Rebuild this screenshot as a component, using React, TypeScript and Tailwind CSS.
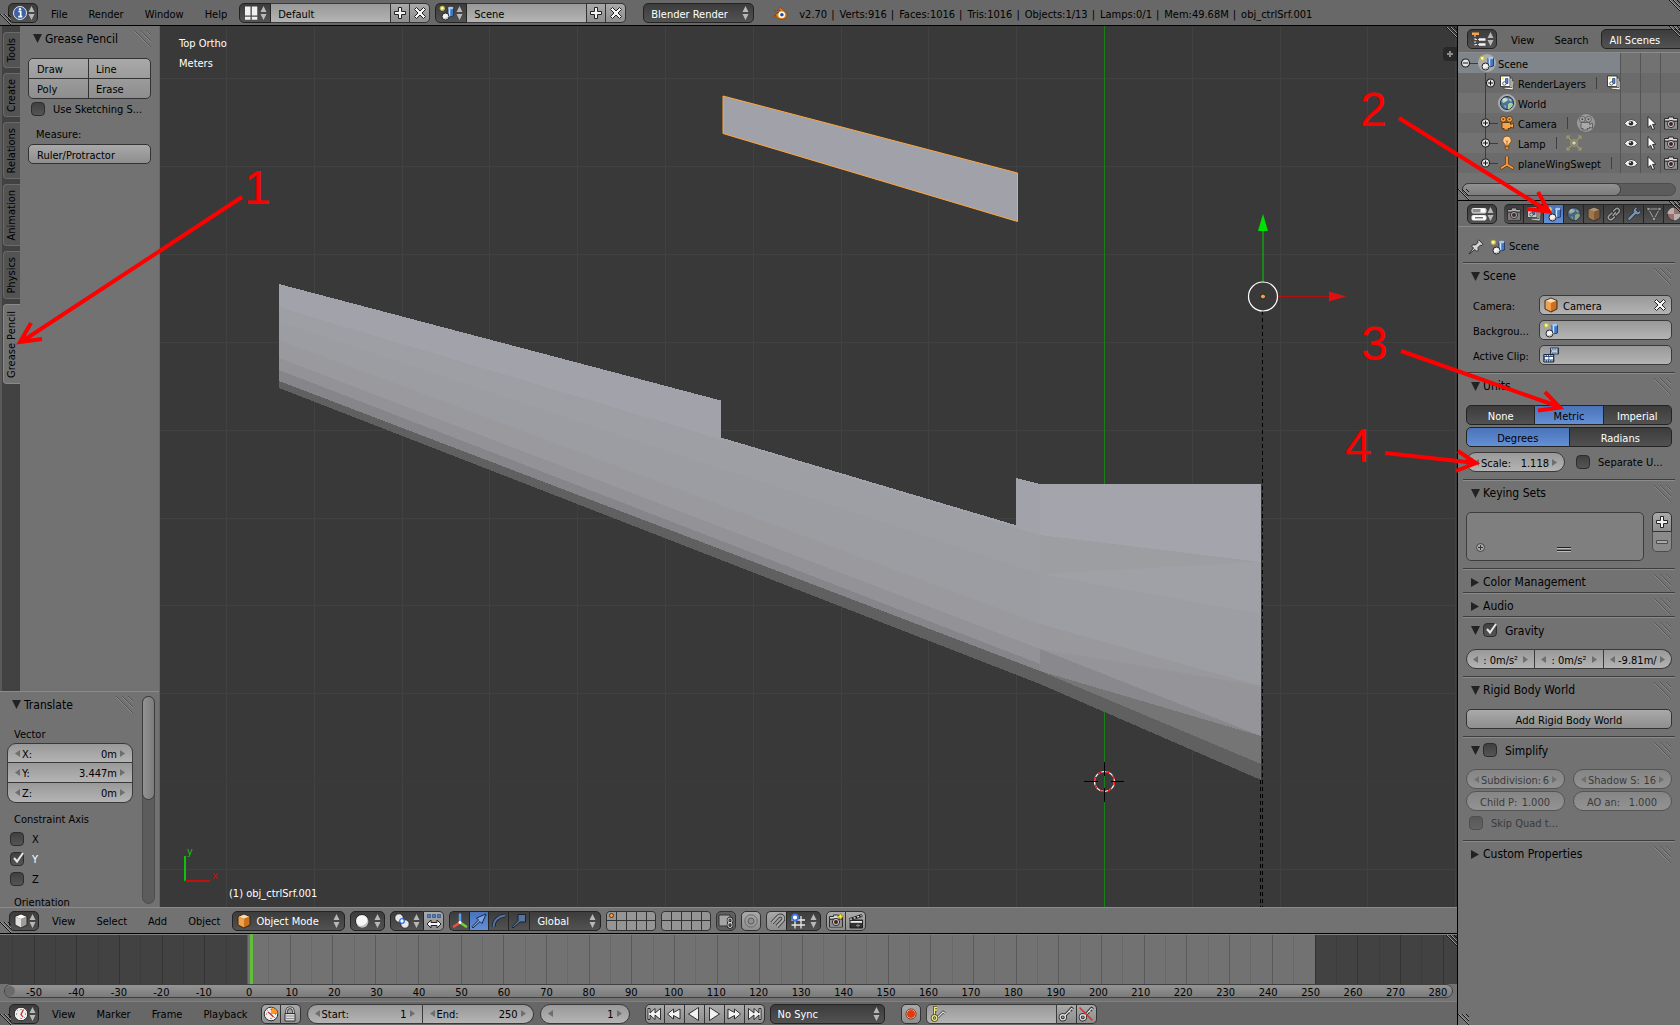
import React from 'react';
import clsx from 'clsx';

const raised = 'bg-linear-to-b from-[#a9a9a9] to-[#8e8e8e] border-[#333333] text-black';
const sunken = 'bg-linear-to-b from-[#999999] to-[#b4b4b4] border-[#3a3a3a] text-black';
const dark = 'bg-linear-to-b from-[#3c3c3c] to-[#525252] border-[#232323] text-white';
const blue = 'bg-linear-to-b from-[#4a73b8] to-[#6590d6] border-[#232323] text-black';

/* ---------- icons ---------- */

const Svg = ({ children, size = 16 }: { children: React.ReactNode; size?: number }) => (
  <svg width={size} height={size} viewBox="0 0 16 16" className="shrink-0" aria-hidden="true">
    {children}
  </svg>
);

const UpDown = () => (
  <svg width="7" height="14" viewBox="0 0 7 14" className="shrink-0" fill="#b8b8b8" aria-hidden="true">
    <path d="M3.500 0 6.500 6h-6zM3.500 14 6.500 8h-6z" />
  </svg>
);

const TriLeft = () => (
  <svg width="5" height="7" viewBox="0 0 5 7" className="shrink-0" fill="#6e6e6e" aria-hidden="true">
    <path d="M5 0v7L0 3.500z" />
  </svg>
);

const TriRight = () => (
  <svg width="5" height="7" viewBox="0 0 5 7" className="shrink-0" fill="#6e6e6e" aria-hidden="true">
    <path d="M0 0v7l5-3.500z" />
  </svg>
);

const InfoIcon = () => (
  <Svg>
    <circle cx="8" cy="8" r="6.500" fill="#3d62a0" stroke="#dfe6f0" strokeWidth="1" />
    <path d="M6.500 6.500h2.200v5M6.300 11.600h4" stroke="#fff" strokeWidth="1.600" fill="none" />
    <circle cx="8" cy="4.200" r="1.200" fill="#fff" />
  </Svg>
);

const LayoutIcon = () => (
  <Svg>
    <path d="M2 1.500h5.500v9H2zM8.800 1.500h5.500v9H8.800zM2 11.700h5.500v3H2zM8.800 11.700h5.500v3H8.800z" fill="#f1f1f1" />
  </Svg>
);

const SceneIcon = () => (
  <Svg>
    <path d="M9 3v8q2.500 1.500 5.500 0V3z" fill="#3f78cb" stroke="#1a2f55" strokeWidth=".8" />
    <path d="M9.600 3.500h1.600v8H9.600z" fill="#cfe2fb" />
    <ellipse cx="11.700" cy="3" rx="2.800" ry="1.200" fill="#a9c8ee" />
    <circle cx="6.500" cy="11.500" r="3.500" fill="#f2f2f2" stroke="#222" strokeWidth="1" />
    <path d="M4.500 13.500a3.200 3.200 0 0 0 5-3q-1 2.500-5 3z" fill="#bbb" />
    <circle cx="3.300" cy="3.300" r="2" fill="#fbf9d2" stroke="#c2bb45" strokeWidth="1.300" />
  </Svg>
);

const PlusIcon = () => (
  <Svg>
    <path d="M6.500 2.500h3v4h4v3h-4v4h-3v-4h-4v-3h4z" fill="#f4f4f4" stroke="#222" strokeWidth="1" />
  </Svg>
);

const MinusIcon = () => (
  <Svg>
    <path d="M2.500 6.500h11v3h-11z" fill="#a8a8a8" stroke="#4c4c4c" strokeWidth="1" />
  </Svg>
);

const CrossIcon = () => (
  <Svg>
    <path d="m2.500 4.500 2-2L8 6l3.500-3.500 2 2L10 8l3.500 3.500-2 2L8 10l-3.500 3.500-2-2L6 8z" fill="#f4f4f4" stroke="#222" strokeWidth="1" />
  </Svg>
);

const BlenderIcon = () => (
  <Svg>
    <path d="M1 11.500 7 7H2.500V5.700h6L6.700 4l1.400-1.500 5.400 4.600Q15.500 9 15 11t-3 3-5.500-.4-2.700-3.600L2 12.600z" fill="#ee7f1b" stroke="#5e3107" strokeWidth=".5" />
    <circle cx="9.700" cy="9.700" r="3.300" fill="#fff" />
    <circle cx="9.900" cy="9.700" r="1.800" fill="#1f4f9a" />
  </Svg>
);

const CubeIcon = ({ tone = 'orange' }: { tone?: 'orange' | 'white' | 'dim' }) => {
  const fills = {
    orange: ['#ffd9a6', '#f3a04a', '#c9711c'],
    white: ['#ffffff', '#dedede', '#9c9c9c'],
    dim: ['#dcb489', '#c48a50', '#966233'],
  }[tone];
  return (
    <Svg>
      <path d="M8 1 14 3.500 8 6 2 3.500z" fill={fills[0]} />
      <path d="M2 3.500 8 6v9l-6-3z" fill={fills[1]} />
      <path d="M14 3.500 8 6v9l6-3z" fill={fills[2]} />
      <path d="M8 1 14 3.500V12l-6 3-6-3V3.500z" fill="none" stroke="#2b2118" strokeWidth=".9" />
    </Svg>
  );
};

const TreeIcon = () => (
  <Svg>
    <path d="M1 1.500h7v2.500H1z" fill="#f5a64c" />
    <path d="M4 4v10.500M4 8.500h4M4 13.500h4" stroke="#ddd" strokeWidth="1" fill="none" strokeDasharray="2 1" />
    <path d="M8 7.300h6.500v2.500H8zM8 12.300h6.500v2.500H8z" fill="#f5f5f5" />
  </Svg>
);

const PropsIcon = () => (
  <Svg>
    <rect x="1" y="2.500" width="14" height="4.500" rx="1.200" fill="#8d8d8d" stroke="#eee" />
    <path d="M9.500 3h5v3.500h-5z" fill="#fff" />
    <rect x="1" y="9.500" width="14" height="4.500" rx="1.200" fill="#fff" stroke="#eee" />
    <path d="M4 11.800h8" stroke="#333" />
  </Svg>
);

const LayersIcon = () => (
  <Svg>
    <path d="m6 5 9 1-1 9-9-1z" fill="#f7f3e2" stroke="#333" strokeWidth=".7" />
    <path d="M3.500 3h9.500v9.500H3.500z" fill="#eee" stroke="#333" strokeWidth=".7" />
    <path d="M1.500 1h9.500v10.500H1.500z" fill="#fff" stroke="#222" strokeWidth=".8" />
    <path d="M6.500 3.500H9v5H6.500z" fill="#4d86d6" stroke="#1a2f55" strokeWidth=".6" />
    <circle cx="5.400" cy="8.500" r="1.700" fill="#fff" stroke="#222" strokeWidth=".7" />
    <circle cx="3.800" cy="3.600" r="1.100" fill="#e9e36c" />
  </Svg>
);

const WorldIcon = () => (
  <Svg>
    <circle cx="8" cy="8" r="6.500" fill="#4a719f" stroke="#1f2f42" />
    <path d="M3.500 4.500q3-2.500 4-.5T6.500 7t-2 1-2-1.500zM9 9q3-2 4.500-.5T11.500 13 9 11.500zM9.500 3.500l2.500.8 1 2-2 .2zM5 10l2 1-.5 2.500z" fill="#a9cf9b" />
    <ellipse cx="6.500" cy="4.500" rx="3" ry="1.800" fill="#fff" opacity=".45" />
  </Svg>
);

const MovieCamIcon = ({ muted = false }: { muted?: boolean }) => (
  <Svg>
    <g fill={muted ? '#a9a9a9' : '#f5a44a'} stroke={muted ? '#5b5b5b' : '#5e3710'} strokeWidth=".9">
      <circle cx="4.300" cy="4.300" r="2.900" />
      <circle cx="10.500" cy="4.300" r="2.900" />
      <path d="M3 7.500h8.500v2l3-1.300v5L11.500 12v1.500H9l.8 1.500H4.500l.7-1.500H3z" />
    </g>
    <circle cx="4.300" cy="4.300" r="1" fill="#5a4128" />
    <circle cx="10.500" cy="4.300" r="1" fill="#5a4128" />
  </Svg>
);

const BulbIcon = () => (
  <Svg>
    <path d="M8 1a4.300 4.300 0 0 0-2.500 7.800q.7 1 .7 2.200h3.600q0-1.200.7-2.200A4.300 4.300 0 0 0 8 1z" fill="#ffc98a" stroke="#7d481a" strokeWidth=".9" />
    <path d="M7 5.500 8 7l1-1.500M8 7v3.500" stroke="#b35f18" strokeWidth=".8" fill="none" />
    <path d="M6.300 11.300h3.400v2.500L8.500 15h-1l-1.200-1.200z" fill="#d98b43" stroke="#5e3710" strokeWidth=".7" />
  </Svg>
);

const EmptyIcon = () => (
  <Svg>
    <path d="M8 2v7.500L2.500 13M8 9.500l5.500 3.500" fill="none" stroke="#5e3710" strokeWidth="3.200" strokeLinecap="round" />
    <path d="M8 2v7.500L2.500 13M8 9.500l5.500 3.500" fill="none" stroke="#ff9d3a" strokeWidth="1.800" strokeLinecap="round" />
  </Svg>
);

const LampDataIcon = () => (
  <Svg>
    <g stroke="#a19a68" fill="none" strokeWidth="1.100">
      <path d="m5 5-3.500-3.500M1 4V1h3M11 5l3.500-3.500M12 1h3v3M5 11l-3.500 3.500M1 12v3h3M11 11l3.500 3.500M12 15h3v-3" />
      <circle cx="8" cy="8" r="3.300" />
    </g>
    <circle cx="8" cy="8" r="1.800" fill="#d9d5b4" />
  </Svg>
);

const EyeIcon = () => (
  <Svg>
    <path d="M1.500 8.500Q4 4.500 8.200 4.500T14.500 8.500Q12 12 8 12T1.500 8.500z" fill="#f3f3f3" stroke="#2b2b2b" strokeWidth=".8" />
    <circle cx="8" cy="8.200" r="2.300" fill="#2a2a2a" />
    <circle cx="7.200" cy="7.200" r=".8" fill="#fff" />
  </Svg>
);

const PointerIcon = () => (
  <Svg>
    <path d="M5 1.500v11l2.600-2.300 1.900 4.300 2-.9-1.900-4.100 3.200-.3z" fill="#fff" stroke="#1f1f1f" strokeWidth=".9" />
  </Svg>
);

const PhotoIcon = ({ star = false }: { star?: boolean }) => (
  <Svg>
    <path d="M1.500 3.500h4V2h5v1.500h4V14h-13z" fill="#d8d8d8" stroke="#1f1f1f" strokeWidth=".9" />
    <path d="M2 5.500h12v2H2z" fill="#444" />
    <path d="M2 7.500h12v5.500H2z" fill="#8f8f8f" />
    <circle cx="8" cy="9" r="3.600" fill="#c9c9c9" stroke="#1f1f1f" strokeWidth=".9" />
    <circle cx="8" cy="9" r="2" fill="#4a2020" />
    {star && <path d="m12.500 0 1 2.500L16 3.500l-2.500 1-1 2.500-1-2.500-2.500-1 2.500-1z" fill="#ffe23d" stroke="#8a7208" strokeWidth=".5" />}
  </Svg>
);

const ClapperIcon = () => (
  <Svg>
    <path d="M2 7h12.500v8H2z" fill="#333" stroke="#111" strokeWidth=".8" />
    <path d="m1.500 5.500 12-4 .7 2-12 4z" fill="#f0f0f0" stroke="#111" strokeWidth=".8" />
    <path d="m4 4.700 1.500 1.500M7.500 3.500 9 5M11 2.300l1.500 1.500" stroke="#111" strokeWidth="1.500" />
    <path d="M2.500 8h11.500v1.800H2.500z" fill="#eee" />
    <path d="M8 12.500h4M10 10.800v3.500" stroke="#888" />
  </Svg>
);

const ChainIcon = () => (
  <Svg>
    <g fill="none" strokeLinecap="round">
      <path d="m7 9.500 2.500-3M6 7 3 9.800a2.300 2.300 0 0 0 3.200 3.300L8.500 11M7.500 5l2.300-2.200A2.300 2.300 0 0 1 13 6l-3 3" stroke="#222" strokeWidth="3" />
      <path d="m7 9.500 2.500-3M6 7 3 9.800a2.300 2.300 0 0 0 3.200 3.300L8.500 11M7.500 5l2.300-2.200A2.300 2.300 0 0 1 13 6l-3 3" stroke="#c4c4c4" strokeWidth="1.500" />
    </g>
  </Svg>
);

const WrenchIcon = () => (
  <Svg>
    <path d="M14.500 4 12 6l-2-2 2-2.500Q9 .5 7.800 3t-.3 3.500L1.800 12q-.6 1.200.3 2t2 .2L9.500 8.500Q12 9.500 13.800 8t.7-4z" fill="#8fb0dc" stroke="#1e2a3c" strokeWidth=".9" />
  </Svg>
);

const MeshIcon = () => (
  <Svg>
    <path d="M2.500 3h11L8 13z" fill="none" stroke="#c8c8c8" strokeWidth="1" />
    <path d="M1 1.500h3v3H1zM12 1.500h3v3h-3zM6.500 11.500h3v3h-3z" fill="#c0c0c0" stroke="#222" strokeWidth=".6" />
  </Svg>
);

const MaterialIcon = () => (
  <Svg>
    <circle cx="8" cy="8" r="6.500" fill="#c07f7f" stroke="#2a2a2a" />
    <path d="M8 1.500V8h6.500A6.500 6.500 0 0 1 8 14.500V8H1.500A6.500 6.500 0 0 1 8 1.500z" fill="#e5dede" />
  </Svg>
);

const PinIcon = () => (
  <Svg>
    <path d="m1 15 4.500-6L3.500 7 5 5.700l2.500.3L10 3.500 9.500 2l1.300-1L15 5.200l-1 1.300-1.500-.5L10 8.500l.3 2.500L9 12.500l-2-2z" fill="#d9d9d9" stroke="#222" strokeWidth=".9" />
  </Svg>
);

const ClipIcon = () => (
  <Svg>
    <path d="M7.500 1h8v6h-8z" fill="#6d86a8" stroke="#1d2b3f" strokeWidth=".9" />
    <path d="M8 2h7M8 6h7" stroke="#e8eef7" strokeDasharray="1.300 1" />
    <path d="M9 3.300h5v1.600H9z" fill="#c9d8ea" />
    <path d="M.8 7.500h10v7.500H.8z" fill="#274a7d" stroke="#14233b" strokeWidth=".9" />
    <path d="M1.500 8.600h9M1.500 13.900h9" stroke="#fff" strokeDasharray="1.300 1" />
    <path d="M1.800 10h3.700v2.600H1.800zM6.300 10H10v2.600H6.300z" fill="#fff" />
  </Svg>
);

const SphereIcon = () => (
  <Svg>
    <circle cx="8" cy="8" r="6.500" fill="#f6f6f6" stroke="#1c1c1c" />
    <path d="M3 12a6.300 6.300 0 0 0 11-6q-1 5-4.500 6.200T3 12z" fill="#c2c2c2" />
  </Svg>
);

const PivotIcon = () => (
  <Svg>
    <circle cx="5" cy="5" r="4.200" fill="#e8e8e8" stroke="#1c1c1c" strokeWidth=".8" />
    <circle cx="11" cy="11" r="4.200" fill="#e8e8e8" stroke="#1c1c1c" strokeWidth=".8" />
    <circle cx="8" cy="8" r="2.300" fill="#fff" stroke="#2f6fe0" strokeWidth="1.300" />
  </Svg>
);

const AlignIcon = () => (
  <Svg>
    <path d="M1.500 1.500h3v3h-3zM6.500 1.500h3v3h-3zM11.500 1.500h3v3h-3z" fill="#4a7dd0" stroke="#213f70" strokeWidth=".6" />
    <path d="m1 11 4-4v2.500h6V7l4 4-4 4v-2.500H5V15z" fill="#f5f5f5" stroke="#222" strokeWidth="1" />
  </Svg>
);

const AxesIcon = () => (
  <Svg>
    <path d="M8 1.500V9" stroke="#5f9bf0" strokeWidth="2.500" strokeLinecap="round" />
    <path d="M8 9.500 2 13.500" stroke="#f0503c" strokeWidth="2.500" strokeLinecap="round" />
    <path d="m8 9.500 6 4" stroke="#74d33a" strokeWidth="2.500" strokeLinecap="round" />
    <circle cx="8" cy="9.500" r="1.400" fill="#fff" />
  </Svg>
);

const ArrowIcon = () => (
  <Svg>
    <path d="m2 15-1-1.200L7.500 7 5.500 5 15 1l-4 9.500-2-2z" fill="#7fa6e6" stroke="#14284c" strokeWidth="1" />
  </Svg>
);

const ArcIcon = () => (
  <Svg>
    <path d="M2.500 14Q3 4 14 2.500" fill="none" stroke="#16202f" strokeWidth="3.500" />
    <path d="M2.500 14Q3 4 14 2.500" fill="none" stroke="#56749f" strokeWidth="1.800" />
  </Svg>
);

const ScaleIcon = () => (
  <Svg>
    <path d="m2 15-1-1.200L7 7.500V1.500h7.500V9H9z" fill="#56749f" stroke="#16202f" strokeWidth="1" />
  </Svg>
);

const LockLayersIcon = () => (
  <Svg>
    <path d="M1 2h11v11H1z" fill="#a4a4a4" stroke="#333" />
    <rect x="10" y="5" width="4" height="5" rx="2" fill="none" stroke="#222" strokeWidth="2.400" />
    <rect x="10" y="9.500" width="4" height="5" rx="2" fill="none" stroke="#222" strokeWidth="2.400" />
    <rect x="10" y="5" width="4" height="5" rx="2" fill="none" stroke="#dedede" />
    <rect x="10" y="9.500" width="4" height="5" rx="2" fill="none" stroke="#dedede" />
  </Svg>
);

const ProportionalIcon = () => (
  <Svg>
    <circle cx="8" cy="8" r="6.200" fill="none" stroke="#6d6d6d" />
    <circle cx="8" cy="8" r="3" fill="#8f8f8f" stroke="#5c5c5c" />
  </Svg>
);

const MagnetIcon = () => (
  <Svg>
    <path d="M3 10 9 3.500a3 3 0 0 1 4.500 4.200L8 13.500" fill="none" stroke="#3d3d3d" strokeWidth="4" />
    <path d="M3 10 9 3.500a3 3 0 0 1 4.500 4.200L8 13.500" fill="none" stroke="#a9a9a9" strokeWidth="2.200" />
  </Svg>
);

const SnapGridIcon = () => (
  <Svg>
    <path d="M5 3v12.500M11 3v12.500M1.500 7H15M1.500 12H15" stroke="#e8e8e8" strokeWidth="1.300" />
    <circle cx="5" cy="4.500" r="3" fill="#fff" stroke="#3b7ae0" strokeWidth="1.800" />
  </Svg>
);

const ClockIcon = ({ wedge = false }: { wedge?: boolean }) => (
  <Svg>
    <circle cx="8" cy="8" r="6.800" fill="#ededed" stroke="#2b2b2b" />
    {wedge && <path d="M8 8V1.500A6.500 6.500 0 0 1 14.500 8z" fill="#ff9a1f" />}
    <path d="M8 3v1M8 12v1M3 8h1M12 8h1M4.500 4.500l.5.500M11 11l.5.500" stroke="#555" />
    <path d={wedge ? 'M5 6l3 2.500 2.500 2.500' : 'M10.500 3.500 8 8.500l2 2.500'} fill="none" stroke="#c22" strokeWidth="1.200" />
  </Svg>
);

const LockIcon = () => (
  <Svg>
    <path d="M4.700 8V5a3.300 3.300 0 0 1 6.600 0v3" fill="none" stroke="#222" strokeWidth="2.600" />
    <path d="M4.700 8V5a3.300 3.300 0 0 1 6.600 0v3" fill="none" stroke="#ddd" strokeWidth="1.100" />
    <path d="M3 7.500h10v7.500H3z" fill="#dcdcdc" stroke="#222" strokeWidth=".9" />
    <path d="M4 10h8M4 12.500h8" stroke="#8f8f8f" />
  </Svg>
);

const Transport = ({ d }: { d: string }) => (
  <Svg>
    <path d={d} fill="#f2f2f2" stroke="#1e1e1e" strokeWidth=".9" strokeLinejoin="round" />
  </Svg>
);

const RecordIcon = () => (
  <Svg>
    <circle cx="8" cy="8" r="5" fill="#fff" stroke="#7a2a10" />
    <circle cx="8" cy="8" r="4" fill="#e5390c" />
  </Svg>
);

const KeyIcon = ({ struck = false }: { struck?: boolean }) => (
  <Svg>
    <path d="m6.500 10 7-7.500 1.500 1M11 5l1.700 1.500" fill="none" stroke="#222" strokeWidth="3" />
    <circle cx="4.800" cy="11.300" r="2.600" fill="none" stroke="#222" strokeWidth="3" />
    <path d="m6.500 10 7-7.500 1.500 1M11 5l1.700 1.500" fill="none" stroke="#ddd" strokeWidth="1.300" />
    <circle cx="4.800" cy="11.300" r="2.600" fill="none" stroke="#ddd" strokeWidth="1.400" />
    {struck && <path d="m1.500 1.500 13 13" stroke="#d93030" strokeWidth="1.600" />}
  </Svg>
);

const KeyingSetIcon = () => (
  <Svg>
    <path d="m8 11 5-5 2 1.500" fill="none" stroke="#444" strokeWidth="2.600" />
    <path d="m8 11 5-5 2 1.500" fill="none" stroke="#ddd" strokeWidth="1.200" />
    <path d="M4.500 10V1.500h2.500M4.500 4H7" fill="none" stroke="#4a4410" strokeWidth="2.800" />
    <path d="M4.500 10V1.500h2.500M4.500 4H7" fill="none" stroke="#f1e98c" strokeWidth="1.300" />
    <circle cx="4.500" cy="12" r="2.300" fill="none" stroke="#4a4410" strokeWidth="2.800" />
    <circle cx="4.500" cy="12" r="2.300" fill="none" stroke="#f1e98c" strokeWidth="1.300" />
  </Svg>
);

/* Diagonal drag grip found on panel headers */
const Grip = () => (
  <svg width="17" height="17" viewBox="0 0 17 17" className="shrink-0" fill="none" aria-hidden="true">
    <path d="m0 0 17 17M6 0l11 11M12 0l5 5" stroke="#555" />
    <path d="m0 1 16 16M6 1l11 11M12 1l5 5" stroke="#959595" strokeWidth=".7" />
  </svg>
);

/* Striped area corners */
const Corner = ({ className }: { className: string }) => (
  <svg width="11" height="11" viewBox="0 0 11 11" className={clsx('absolute', className)} fill="none" aria-hidden="true">
    <path d="m0 0 11 11M4 0l7 7M8 0l3 3" stroke="#161616" />
    <path d="m1 0 10 10M5 0l6 6" stroke="#9a9a9a" />
  </svg>
);

/* ---------- controls ---------- */

const EditorButton = ({ label, children }: { label: string; children: React.ReactNode }) => (
  <button aria-label={label} className={clsx('flex h-5 w-[30px] shrink-0 items-center justify-between rounded-[5px] border pl-[3px] pr-[3px]', dark)}>
    {children}
    <UpDown />
  </button>
);

const Menus = ({ items }: { items: string[] }) => (
  <nav className="ml-[13px] flex gap-[21px]">
    {items.map((item) => (
      <button key={item} className="pt-[3px] text-black">{item}</button>
    ))}
  </nav>
);

const Dropdown = ({ label, value, className, icon }: { label: string; value: string; className?: string; icon?: React.ReactNode }) => (
  <div className={clsx('flex h-5 shrink-0 items-center gap-1 border pr-1', dark, className)}>
    {icon}
    <select aria-label={label} className="w-full min-w-0 appearance-none bg-transparent pt-[3px] outline-none">
      <option>{value}</option>
    </select>
    <UpDown />
  </div>
);

const IconButton = ({ label, className, children }: { label: string; className?: string; children: React.ReactNode }) => (
  <button aria-label={label} className={clsx('flex h-5 w-5 shrink-0 items-center justify-center border', className)}>
    {children}
  </button>
);

const DataBlock = ({ label, value, icon }: { label: string; value: string; icon: React.ReactNode }) => (
  <div className="flex shrink-0">
    <button aria-label={`Browse ${label}`} className={clsx('flex h-5 w-8 items-center justify-between rounded-l-[5px] border pl-[3px] pr-[3px]', dark)}>
      {icon}
      <UpDown />
    </button>
    <input aria-label={label} defaultValue={value} className={clsx('h-5 w-[119px] border-y px-[7px] pt-[3px] outline-none', sunken)} />
    <IconButton label={`Add ${label}`} className={raised}><PlusIcon /></IconButton>
    <IconButton label={`Delete ${label}`} className={clsx('rounded-r-[5px] border-l-0', raised)}><CrossIcon /></IconButton>
  </div>
);

const NumField = ({ label, value, className, arrows = true }: { label: string; value: string; className?: string; arrows?: boolean }) => (
  <label className={clsx('flex h-5 items-center border', arrows ? 'px-[7px]' : 'px-[11px]', sunken, className)}>
    {arrows && <TriLeft />}
    <span className="shrink-0 pl-[2px] pt-[3px]">{label}</span>
    <input defaultValue={value} className="w-full min-w-0 flex-1 bg-transparent pr-[3px] pt-[3px] text-right outline-none" />
    {arrows && <TriRight />}
  </label>
);

const Check = ({ label, checked = false, className }: { label: string; checked?: boolean; className?: string }) => (
  <label className={clsx('flex items-center gap-2', className)}>
    <span className="grid">
      <input type="checkbox" defaultChecked={checked} className="peer col-start-1 row-start-1 size-[14px] appearance-none rounded-[4px] border border-[#2c2c2c] bg-linear-to-b from-[#404040] to-[#555555]" />
      <svg width="14" height="14" viewBox="0 0 14 14" className="pointer-events-none invisible col-start-1 row-start-1 overflow-visible peer-checked:visible" aria-hidden="true">
        <path d="m4 6 3 3.500L13 1" fill="none" stroke="#e8e8e8" strokeWidth="2" />
      </svg>
    </span>
    <span className="pt-px">{label}</span>
  </label>
);

const PanelHeader = ({ title, open = true, children }: { title: string; open?: boolean; children?: React.ReactNode }) => (
  <div className="flex h-[23px] items-center pl-2 pr-1 pt-[3px]">
    <svg width="9" height="9" viewBox="0 0 9 9" className="shrink-0" fill="#222" aria-hidden="true">
      <path d={open ? 'M0 0h9L4.500 9z' : 'M0 0v9l8-4.500z'} />
    </svg>
    {children ?? <h2 className="ml-[3px] text-[12px]">{title}</h2>}
    <span className="ml-auto"><Grip /></span>
  </div>
);

const Panel = ({ title, open = true, header, children }: { title: string; open?: boolean; header?: React.ReactNode; children?: React.ReactNode }) => (
  <section className="mx-[5px] border-t border-[#3d3d3d] shadow-[inset_0_1px_0_#8b8b8b]">
    <PanelHeader title={title} open={open}>{header}</PanelHeader>
    {open && <div className="px-[3px] pb-[7px] pt-[9px]">{children}</div>}
  </section>
);

/* ---------- top bar ---------- */

const STATS = ['v2.70', 'Verts:916', 'Faces:1016', 'Tris:1016', 'Objects:1/13', 'Lamps:0/1', 'Mem:49.68M', 'obj_ctrlSrf.001'];

const InfoBar = () => (
  <header className="relative flex h-[26px] shrink-0 items-center border-b border-black bg-[#686868] pl-2 pt-px">
    <EditorButton label="Editor type: Info"><InfoIcon /></EditorButton>
    <Menus items={['File', 'Render', 'Window', 'Help']} />
    <div className="ml-3 flex gap-[5px]">
      <DataBlock label="Screen layout" value="Default" icon={<LayoutIcon />} />
      <DataBlock label="Scene" value="Scene" icon={<SceneIcon />} />
    </div>
    <Dropdown label="Render engine" value="Blender Render" className="ml-[17px] w-[111px] rounded-[5px] pl-[7px]" />
    <div className="ml-[18px] flex items-center gap-[11px] whitespace-nowrap text-black">
      <BlenderIcon />
      <p className="flex gap-1 pt-[3px]">
        {STATS.map((s, i) => (
          <React.Fragment key={s}>
            {i > 0 && <span className="pr-px">|</span>}
            <span>{s}</span>
          </React.Fragment>
        ))}
      </p>
    </div>
    <Corner className="bottom-0 left-0" />
    <Corner className="right-0 top-0" />
  </header>
);

/* ---------- tool shelf ---------- */

const TABS = [
  { name: 'Tools', className: 'h-9' },
  { name: 'Create', className: 'h-11' },
  { name: 'Relations', className: 'h-[57px]' },
  { name: 'Animation', className: 'h-[62px]' },
  { name: 'Physics', className: 'h-12' },
  { name: 'Grease Pencil', className: 'h-20' },
];

const ShelfHeader = ({ title }: { title: string }) => (
  <div className="flex h-[25px] items-center pl-[5px]">
    <svg width="9" height="9" viewBox="0 0 9 9" className="shrink-0" fill="#222" aria-hidden="true">
      <path d="M0 0h9L4.500 9z" />
    </svg>
    <h2 className="ml-[3px] pt-px text-[12px]">{title}</h2>
    <span className="ml-auto"><Grip /></span>
  </div>
);

const ToolShelf = () => (
  <aside className="flex w-[160px] shrink-0 flex-col border-r border-[#666] bg-[#727272] text-black">
    <div className="flex min-h-0 flex-1">
      <div className="flex w-5 shrink-0 flex-col gap-[5px] border-l-2 border-[#5a5a5a] bg-[#424242] pl-px pt-[6px]">
        {TABS.map((tab) => (
          <button
            key={tab.name}
            className={clsx(
              'flex shrink-0 items-center justify-center rounded-l-[4px] border-y border-l',
              tab.className,
              tab.name === 'Grease Pencil' ? 'border-[#8a8a8a] bg-[#727272]' : 'border-[#6a6a6a] bg-[#535353]',
            )}
          >
            <span className="rotate-180 whitespace-nowrap [writing-mode:vertical-rl]">{tab.name}</span>
          </button>
        ))}
      </div>
      <section className="min-w-0 flex-1 px-2">
        <ShelfHeader title="Grease Pencil" />
        <div className={clsx('mt-[7px] grid grid-cols-[60px_1fr] overflow-hidden rounded-[5px] border', raised)}>
          <button className="h-5 border-b border-r border-[#333] pl-2 pt-[3px] text-left">Draw</button>
          <button className="h-5 border-b border-[#333] pl-[7px] pt-[3px] text-left">Line</button>
          <button className="h-[19px] border-r border-[#333] pl-2 pt-[3px] text-left">Poly</button>
          <button className="h-[19px] pl-[7px] pt-[3px] text-left">Erase</button>
        </div>
        <Check label="Use Sketching S..." className="h-5 whitespace-nowrap pl-[3px]" />
        <p className="mt-[5px] flex h-5 items-center pl-2 pt-[2px]">Measure:</p>
        <button className={clsx('h-5 w-full rounded-[5px] border pl-2 pt-[3px] text-left', raised)}>Ruler/Protractor</button>
      </section>
    </div>

    <section className="flex h-[216px] shrink-0 overflow-hidden border-t border-[#8b8b8b] pl-[7px]">
      <div className="w-[126px] shrink-0">
        <ShelfHeader title="Translate" />
        <p className="mt-2 flex h-[18px] items-center pl-[7px] pt-[2px]">Vector</p>
        <NumField label="X:" value="0m" className="rounded-t-[9px]" />
        <NumField label="Y:" value="3.447m" className="border-t-0" />
        <NumField label="Z:" value="0m" className="rounded-b-[9px] border-t-0" />
        <p className="mt-[6px] flex h-5 items-center pl-[7px] pt-px">Constraint Axis</p>
        <Check label="X" className="h-5 pl-[3px]" />
        <Check label="Y" checked className="h-5 pl-[3px] text-white" />
        <Check label="Z" className="h-5 pl-[3px]" />
        <p className="mt-2 pl-[7px] leading-3">Orientation</p>
      </div>
      <div className="mb-[3px] ml-[9px] mt-1 w-[13px] rounded-full border border-[#4c4c4c] bg-[#5c5c5c]">
        <div className="-mx-px -mt-px h-[104px] rounded-full border border-[#3d3d3d] bg-linear-to-r from-[#929292] to-[#7c7c7c]" />
      </div>
    </section>
  </aside>
);

/* ---------- 3D view ---------- */

const GRID_X = Array.from({ length: 15 }, (_, i) => Math.round(226 + i * 87.8));
const GRID_Y = Array.from({ length: 10 }, (_, i) => Math.round(78 + i * 87.9));

const Viewport = () => (
  <main className="relative min-w-0 flex-1 overflow-hidden bg-[#393939]">
    <svg className="absolute inset-0 h-full w-full" viewBox="160 26 1297 881" preserveAspectRatio="xMidYMid slice" aria-label="Wing, top view">
      <g stroke="#414141" shapeRendering="crispEdges">
        {GRID_X.map((x) => <path key={x} d={`M${x}.500 26v881`} />)}
        {GRID_Y.map((y) => <path key={y} d={`M160 ${y}.500h1297`} />)}
      </g>
      <path d="M160 781.500h1297" stroke="#7b1f1f" shapeRendering="crispEdges" />
      <path d="M1104.500 26v881" stroke="#178017" shapeRendering="crispEdges" />

      <g shapeRendering="crispEdges">
        {/* wing, outer section */}
        <path d="M279 284 721 400.500V437.500L1015.500 525V478L1040 484V684L279 388z" fill="#a2a2ab" />
        <path d="M279 307 1040 535V684L279 388z" fill="#9e9ea5" />
        <path d="M279 322 1040 574V684L279 388z" fill="#9c9da2" />
        <path d="M279 340 1040 624V684L279 388z" fill="#99999e" />
        <path d="M279 358 1040 649V684L279 388z" fill="#939297" />
        <path d="M279 370 1040 664V684L279 388z" fill="#86868a" />
        <path d="M279 381 1040 671V684L279 388z" fill="#606060" />
        {/* wing, root section */}
        <path d="M1040 484H1261V780L1040 684z" fill="#a4a4ad" />
        <path d="M1040 535 1261 562V780L1040 684z" fill="#9d9ea2" />
        <path d="M1040 574 1261 562V780L1040 684z" fill="#a0a1a6" />
        <path d="M1040 574 1261 614V780L1040 684z" fill="#9d9ea3" />
        <path d="M1040 624 1261 686V780L1040 684z" fill="#99989d" />
        <path d="M1040 649 1261 686V780L1040 684z" fill="#959499" />
        <path d="M1040 649 1261 736V780L1040 684z" fill="#89888d" />
        <path d="M1040 671 1261 736V780L1040 684z" fill="#757575" />
        <path d="M1040 671 1261 764V780L1040 684z" fill="#606060" />
      </g>

      {/* selected control surface */}
      <path d="M723 96 1017.500 173V221.500L723 133.500z" fill="#a1a1a9" stroke="#ffa63c" />

      <g stroke="#000" strokeDasharray="4 3" shapeRendering="crispEdges">
        <path d="M1262.500 311v596M1260.500 780v127" />
      </g>

      {/* manipulator */}
      <path d="M1263 282V230" stroke="#00d000" />
      <path d="m1263 214 5 17h-10z" fill="#00e000" />
      <path d="M1278 296.500h52" stroke="#b01010" />
      <path d="m1346 296.500-17-5v10z" fill="#e01010" />
      <circle cx="1263" cy="296.500" r="14.500" fill="none" stroke="#fff" strokeWidth="1.200" />
      <circle cx="1263" cy="296.500" r="2.500" fill="#f0a040" stroke="#222" />

      {/* 3D cursor */}
      <circle cx="1104.500" cy="781.500" r="10" fill="none" stroke="#fff" strokeWidth="1.200" />
      <circle cx="1104.500" cy="781.500" r="10" fill="none" stroke="#f00" strokeWidth="1.200" strokeDasharray="4 4" />
      <path d="M1084 781.500h14M1111 781.500h13M1104.500 762v14M1104.500 788v14" stroke="#000" />

      <path d="M185 856v25" stroke="#10c010" strokeWidth="2" />
      <path d="M185 881h25" stroke="#c01010" strokeWidth="2" />
    </svg>
    <div className="absolute left-[19px] top-2 leading-5 text-white">
      <p>Top Ortho</p>
      <p>Meters</p>
    </div>
    <span className="absolute bottom-12 left-[27px] text-[#10c010]">y</span>
    <span className="absolute bottom-6 left-[52px] text-[#c01010]">x</span>
    <p className="absolute bottom-[6px] left-[69px] text-white">(1) obj_ctrlSrf.001</p>
    <button aria-label="Show properties region" className="absolute right-0 top-[21px] flex h-[14px] w-[14px] items-center justify-center rounded-l-[4px] bg-[#282828]">
      <svg width="8" height="8" viewBox="0 0 8 8" stroke="#8b8b8b" strokeWidth="2" aria-hidden="true"><path d="M4 1v6M1 4h6" /></svg>
    </button>
    <Corner className="right-0 top-px" />
  </main>
);

const Layers = ({ active = false }: { active?: boolean }) => (
  <div className="grid h-5 w-[50px] grid-cols-5 grid-rows-2 gap-px overflow-hidden rounded-[4px] border border-[#333] bg-[#333]">
    {Array.from({ length: 10 }, (_, i) => (
      <button key={i} aria-label={`Layer ${i + 1}`} className="flex items-center justify-center bg-[#959595]">
        {active && i === 0 && <span className="size-[5px] rounded-full border border-[#5c3108] bg-[#ff9d3a]" />}
      </button>
    ))}
  </div>
);

const ViewHeader = () => (
  <div className="relative flex h-[27px] shrink-0 items-center border-b border-t border-b-black border-t-[#8b8b8b] bg-[#727272] pl-[9px]">
    <EditorButton label="Editor type: 3D View"><CubeIcon tone="white" /></EditorButton>
    <Menus items={['View', 'Select', 'Add', 'Object']} />
    <Dropdown label="Mode" value="Object Mode" className="ml-3 w-[113px] rounded-[5px] pl-[3px]" icon={<CubeIcon />} />
    <button aria-label="Viewport shading" className={clsx('ml-[5px] flex h-5 w-[35px] items-center justify-between rounded-[5px] border px-[3px]', dark)}>
      <SphereIcon />
      <UpDown />
    </button>
    <div className="ml-[5px] flex">
      <button aria-label="Pivot point" className={clsx('flex h-5 w-[34px] items-center justify-between rounded-l-[5px] border px-[3px]', dark)}>
        <PivotIcon />
        <UpDown />
      </button>
      <IconButton label="Manipulate centre points" className={clsx('rounded-r-[5px] border-l-0', raised)}><AlignIcon /></IconButton>
    </div>
    <div className="ml-[5px] flex">
      <IconButton label="Manipulator" className={clsx('rounded-l-[5px] border-r-0', dark)}><AxesIcon /></IconButton>
      <IconButton label="Translate" className={blue}><ArrowIcon /></IconButton>
      <IconButton label="Rotate" className={clsx('border-l-0', dark)}><ArcIcon /></IconButton>
      <IconButton label="Scale" className={clsx('border-x-0', dark)}><ScaleIcon /></IconButton>
      <Dropdown label="Transform orientation" value="Global" className="w-[72px] rounded-r-[5px] pl-[7px]" />
    </div>
    <div className="ml-[5px] flex gap-[5px]">
      <Layers active />
      <Layers />
      <IconButton label="Lock layers" className="rounded-[5px] border-[#333] bg-[#5f5f5f]"><LockLayersIcon /></IconButton>
      <IconButton label="Proportional editing" className={clsx('rounded-[5px]', raised)}><ProportionalIcon /></IconButton>
      <div className="flex">
        <IconButton label="Snap" className={clsx('rounded-l-[5px] border-r-0', raised)}><MagnetIcon /></IconButton>
        <button aria-label="Snap element" className={clsx('flex h-5 w-[35px] items-center justify-between rounded-r-[5px] border px-[3px]', dark)}>
          <SnapGridIcon />
          <UpDown />
        </button>
      </div>
      <div className="flex">
        <IconButton label="Render image" className={clsx('rounded-l-[5px]', raised)}><PhotoIcon star /></IconButton>
        <IconButton label="Render animation" className={clsx('rounded-r-[5px] border-l-0', raised)}><ClapperIcon /></IconButton>
      </div>
    </div>
    <Corner className="bottom-0 left-0" />
  </div>
);

/* ---------- timeline ---------- */

const FRAMES = Array.from({ length: 34 }, (_, i) => i * 10 - 50);
const frameX = (frame: number) => 247.5 + frame * 4.27;

const TRANSPORT = [
  { label: 'Jump to start', d: 'M1 2.500h2v4.500l5-4.500V7l5.500-4.500v11L8 9v4.500L3 9v4.500H1z' },
  { label: 'Previous keyframe', d: 'M7.500 3v3.500L14 3v10L7.500 9.500V13L1.500 8z' },
  { label: 'Play backwards', d: 'M12.500 1.500v13L2.500 8z' },
  { label: 'Play', d: 'M3.500 1.500v13l10-6.500z' },
  { label: 'Next keyframe', d: 'M8.500 3v3.500L2 3v10l6.500-3.500V13l6-5z' },
  { label: 'Jump to end', d: 'M15 2.500h-2v4.500L8 2.500V7L2.500 2.500v11L8 9v4.500L13 9v4.500h2z' },
];

const Timeline = () => (
  <section className="shrink-0 bg-[#727272] text-black">
    <div className="relative h-[50px]">
      <svg className="h-full w-full" viewBox="0 0 1457 50" preserveAspectRatio="none" aria-hidden="true">
        <path d="M0 0h247.500v50H0zM1315.500 0H1457v50h-141.500z" fill="#424242" />
        <path d="M0 .5h1457" stroke="#808080" />
        {FRAMES.map((f) => (
          <g key={f} shapeRendering="crispEdges">
            <path d={`M${frameX(f)} 1v49`} stroke={f < 0 || f >= 250 ? '#333' : '#5b5b5b'} />
            <path d={`M${frameX(f - 5)} 1v49`} stroke={f <= 0 || f > 250 ? '#3d3d3d' : '#686868'} />
          </g>
        ))}
        <path d="M250 0h3v50h-3z" fill="#5fbf3b" />
      </svg>
      <Corner className="right-0 top-px" />
    </div>
    <div className="mx-1 flex h-[14px] items-center rounded-full border border-[#404040] bg-linear-to-b from-[#959595] to-[#7a7a7a]">
      <span className="size-[10px] shrink-0 rounded-full bg-[#6a6a6a]" />
      <div className="ml-2 flex flex-1 justify-between pt-[3px]">
        {FRAMES.map((f) => <span key={f} className={clsx('w-7 text-center', f < 0 && 'pr-[6px]')}>{f}</span>)}
      </div>
    </div>
    <div className="relative mt-[3px] flex h-6 items-center border-t border-[#808080] bg-[#676767] pl-[9px]">
      <EditorButton label="Editor type: Timeline"><ClockIcon /></EditorButton>
      <Menus items={['View', 'Marker', 'Frame', 'Playback']} />
      <div className="ml-[13px] flex">
        <IconButton label="Use preview range" className={clsx('rounded-l-[5px]', raised)}><ClockIcon wedge /></IconButton>
        <IconButton label="Lock time to other windows" className={clsx('rounded-r-[5px] border-l-0', raised)}><LockIcon /></IconButton>
      </div>
      <NumField label="Start:" value="1" className="ml-[6px] w-[116px] rounded-l-full" />
      <NumField label="End:" value="250" className="w-[111px] rounded-r-full border-l-0" />
      <NumField label="" value="1" className="ml-[6px] w-[90px] rounded-full" />
      <div className="ml-[15px] flex">
        {TRANSPORT.map((t, i) => (
          <IconButton key={t.label} label={t.label} className={clsx(raised, i === 0 && 'rounded-l-[5px]', i > 0 && 'border-l-0', i === 5 && 'rounded-r-[5px]')}>
            <Transport d={t.d} />
          </IconButton>
        ))}
      </div>
      <Dropdown label="Sync mode" value="No Sync" className="ml-[5px] w-[115px] rounded-[5px] pl-[7px]" />
      <IconButton label="Auto keyframe" className={clsx('ml-4 rounded-[5px]', raised)}><RecordIcon /></IconButton>
      <div className="ml-[5px] flex">
        <div className={clsx('flex h-5 w-[131px] items-center rounded-l-[5px] border pl-[3px]', sunken)}>
          <KeyingSetIcon />
          <input aria-label="Active keying set" className="w-full min-w-0 bg-transparent outline-none" />
        </div>
        <IconButton label="Insert keyframe" className={clsx('border-l-0', raised)}><KeyIcon /></IconButton>
        <IconButton label="Delete keyframe" className={clsx('rounded-r-[5px] border-l-0', raised)}><KeyIcon struck /></IconButton>
      </div>
      <Corner className="bottom-0 left-0" />
    </div>
  </section>
);

/* ---------- outliner ---------- */

type OutlinerRow = {
  name: string;
  icon: React.ReactNode;
  halo?: boolean;
  node: 'root' | 'near' | 'none' | 'branch';
  bar?: boolean;
  data?: React.ReactNode;
  toggles?: boolean;
};

const ROWS: OutlinerRow[] = [
  { name: 'Scene', icon: <SceneIcon />, halo: true, node: 'root' },
  { name: 'RenderLayers', icon: <LayersIcon />, node: 'near', bar: true, data: <LayersIcon /> },
  { name: 'World', icon: <WorldIcon />, halo: true, node: 'none' },
  { name: 'Camera', icon: <MovieCamIcon />, node: 'branch', bar: true, data: <span className="flex size-[18px] items-center justify-center rounded-full bg-[#999999]"><MovieCamIcon muted /></span>, toggles: true },
  { name: 'Lamp', icon: <BulbIcon />, node: 'branch', bar: true, data: <LampDataIcon />, toggles: true },
  { name: 'planeWingSwept', icon: <EmptyIcon />, node: 'branch', bar: true, toggles: true },
];

const TreeCell = ({ node, last }: { node: OutlinerRow['node']; last: boolean }) => {
  const width = node === 'root' ? 20 : 40;
  const cx = { root: 7.5, near: 32.5, none: 0, branch: 27.5 }[node];
  return (
    <svg width={width} height="20" viewBox={`0 0 ${width} 20`} className="shrink-0" fill="none" stroke="#3c3c3c" aria-hidden="true">
      {node !== 'root' && <path d={last ? 'M27.500 0v10' : 'M27.500 0v20'} />}
      {(node === 'root' || node === 'branch') && <path d={`M${cx} 10.500H${width}`} />}
      {node !== 'none' && (
        <>
          <circle cx={cx} cy="10" r="4" fill="#e6e6e6" stroke="#222" strokeWidth="1.200" />
          <path d={node === 'root' ? `M${cx - 2.5} 10h5` : `M${cx - 2.5} 10h5M${cx} 7.500v5`} stroke="#111" />
        </>
      )}
    </svg>
  );
};

const Outliner = () => (
  <section className="relative shrink-0 border-b border-black bg-[#6c6c6c] text-black">
    <div className="flex h-[27px] items-center overflow-hidden border-b border-[#8b8b8b] pl-[9px]">
      <EditorButton label="Editor type: Outliner"><TreeIcon /></EditorButton>
      <nav className="ml-[14px] flex gap-5 pt-[3px]">
        <button>View</button>
        <button>Search</button>
      </nav>
      <Dropdown label="Display mode" value="All Scenes" className="ml-[13px] w-24 rounded-l-[5px] pl-[7px]" />
    </div>
    <ul>
      {ROWS.map((row, i) => (
        <li key={row.name} className={clsx('flex h-5', i % 2 === 0 ? 'bg-[#727272]' : 'bg-[#6b6b6b]')}>
          <div className={clsx('flex min-w-0 flex-1 items-center overflow-hidden', i === 0 && 'bg-[#7f858a]')}>
            <TreeCell node={row.node} last={i === ROWS.length - 1} />
            <span className={clsx('mr-[2px] flex size-[18px] shrink-0 items-center justify-center rounded-full', row.halo && 'bg-[#a9abaf]')}>{row.icon}</span>
            <span className="pt-[3px]">{row.name}</span>
            {row.bar && <span className="ml-[10px] mr-[9px] h-3 w-px shrink-0 bg-[#3f3f3f]" />}
            {row.data}
          </div>
          {[<EyeIcon />, <PointerIcon />, <PhotoIcon />].map((icon, n) => (
            <button key={n} aria-label={['Visible', 'Selectable', 'Renderable'][n]} className="flex w-5 items-center justify-center border-l border-[#555]">
              {row.toggles && icon}
            </button>
          ))}
        </li>
      ))}
    </ul>
    <div className="flex h-[27px] bg-[#727272] pt-[10px]">
      <div className="mx-1 h-[13px] flex-1 rounded-full border border-[#4c4c4c] bg-[#5c5c5c]">
        <div className="-ml-px -mt-px h-[13px] w-3/4 rounded-full border border-[#3d3d3d] bg-linear-to-b from-[#929292] to-[#7c7c7c]" />
      </div>
    </div>
    <Corner className="bottom-0 left-0" />
    <Corner className="right-0 top-0" />
  </section>
);

/* ---------- properties ---------- */

const PROP_TABS = [
  { name: 'Render', icon: <PhotoIcon /> },
  { name: 'Render layers', icon: <LayersIcon /> },
  { name: 'Scene', icon: <SceneIcon /> },
  { name: 'World', icon: <WorldIcon /> },
  { name: 'Object', icon: <CubeIcon tone="dim" /> },
  { name: 'Constraints', icon: <ChainIcon /> },
  { name: 'Modifiers', icon: <WrenchIcon /> },
  { name: 'Data', icon: <MeshIcon /> },
  { name: 'Material', icon: <MaterialIcon /> },
];

const Segments = ({ options, active }: { options: string[]; active: string }) => (
  <div className="flex h-5">
    {options.map((o, i) => (
      <button key={o} className={clsx('flex-1 border pt-[3px]', i > 0 && 'border-l-0', i === 0 && 'rounded-l-[5px]', i === options.length - 1 && 'rounded-r-[5px]', o === active ? blue : dark)}>
        {o}
      </button>
    ))}
  </div>
);

const PickerRow = ({ label, value = '', icon, clear = false }: { label: string; value?: string; icon: React.ReactNode; clear?: boolean }) => (
  <label className="flex h-5 items-center">
    <span className="w-[73px] shrink-0 pl-[7px] pt-[3px]">{label}</span>
    <span className={clsx('flex h-5 min-w-0 flex-1 items-center rounded-[5px] border px-[3px]', sunken)}>
      {icon}
      <input defaultValue={value} className="w-full min-w-0 bg-transparent pl-1 pt-[3px] outline-none" />
      {clear && <CrossIcon />}
    </span>
  </label>
);

const Properties = () => (
  <section className="relative min-h-0 flex-1 overflow-hidden bg-[#727272] text-black">
    <div className="flex h-[26px] items-center overflow-hidden border-b border-[#8b8b8b] bg-[#6c6c6c] pl-[9px]">
      <EditorButton label="Editor type: Properties"><PropsIcon /></EditorButton>
      <div className="ml-[7px] flex">
        {PROP_TABS.map((tab, i) => (
          <IconButton key={tab.name} label={tab.name} className={clsx('border-l-0', i === 0 && 'rounded-l-[5px] border-l', tab.name === 'Scene' ? blue : dark)}>
            <span className={clsx('flex', tab.name !== 'Scene' && 'opacity-70')}>{tab.icon}</span>
          </IconButton>
        ))}
      </div>
    </div>
    <div className="flex h-[35px] items-center pl-[10px] pt-1">
      <PinIcon />
      <span className="ml-[6px] flex items-center gap-[3px]">
        <SceneIcon />
        <span className="pt-px">Scene</span>
      </span>
    </div>

    <Panel title="Scene">
      <div className="space-y-[5px]">
        <PickerRow label="Camera:" value="Camera" icon={<CubeIcon />} clear />
        <PickerRow label="Backgrou..." icon={<SceneIcon />} />
        <PickerRow label="Active Clip:" icon={<ClipIcon />} />
      </div>
    </Panel>

    <Panel title="Units">
      <div className="space-y-[2px]">
        <Segments options={['None', 'Metric', 'Imperial']} active="Metric" />
        <Segments options={['Degrees', 'Radians']} active="Degrees" />
      </div>
      <div className="mt-[5px] flex items-center">
        <NumField label="Scale:" value="1.118" className="w-[99px] rounded-full" />
        <Check label="Separate U..." className="ml-[11px] whitespace-nowrap" />
      </div>
    </Panel>

    <Panel title="Keying Sets">
      <div className="flex items-start gap-2">
        <div className="relative flex h-[49px] flex-1 items-end rounded-[5px] border border-[#3d3d3d] bg-[#7f7f7f] pb-2 pl-[9px]">
          <svg width="9" height="9" viewBox="0 0 9 9" aria-hidden="true">
            <circle cx="4.500" cy="4.500" r="4" fill="#aaa" stroke="#444" />
            <path d="M4.500 2v5M2 4.500h5" stroke="#333" />
          </svg>
          <svg width="14" height="5" viewBox="0 0 14 5" className="absolute bottom-2 left-[90px]" aria-hidden="true">
            <path d="M0 .5h14M0 3.500h14" stroke="#222" />
            <path d="M0 1.500h14M0 4.500h14" stroke="#bbb" />
          </svg>
        </div>
        <div className="flex flex-col">
          <IconButton label="Add keying set" className={clsx('rounded-t-[5px]', raised)}><PlusIcon /></IconButton>
          <IconButton label="Remove keying set" className="rounded-b-[5px] border-t-0 border-[#4c4c4c] bg-[#8a8a8a]"><MinusIcon /></IconButton>
        </div>
      </div>
    </Panel>

    <Panel title="Color Management" open={false} />
    <Panel title="Audio" open={false} />

    <Panel title="Gravity" header={<Check label="Gravity" checked className="ml-[3px] text-[12px]" />}>
      <div className="flex">
        {[': 0m/s²', ': 0m/s²', '-9.81m/'].map((v, i) => (
          <div key={i} className={clsx('flex h-5 min-w-0 flex-1 items-center border px-[6px]', sunken, i === 0 && 'rounded-l-full', i > 0 && 'border-l-0', i === 2 && 'rounded-r-full')}>
            <TriLeft />
            <input aria-label={`Gravity ${'XYZ'[i]}`} defaultValue={v} className="w-full min-w-0 flex-1 bg-transparent pt-[3px] text-center outline-none" />
            <TriRight />
          </div>
        ))}
      </div>
    </Panel>

    <Panel title="Rigid Body World">
      <button className={clsx('h-5 w-full rounded-[5px] border pt-[3px]', raised)}>Add Rigid Body World</button>
    </Panel>

    <Panel title="Simplify" header={<Check label="Simplify" className="ml-[3px] text-[12px]" />}>
      <div className="opacity-50">
        <div className="grid grid-cols-2 gap-x-2 gap-y-[2px]">
          <NumField label="Subdivision:" value="6" className="rounded-full" />
          <NumField label="Shadow S:" value="16" className="rounded-full" />
          <NumField label="Child P:" value="1.000" arrows={false} className="rounded-full" />
          <NumField label="AO an:" value="1.000" arrows={false} className="rounded-full" />
        </div>
        <Check label="Skip Quad t..." className="mt-[2px] h-5 pl-[3px]" />
      </div>
    </Panel>

    <Panel title="Custom Properties" open={false} />
    <Corner className="bottom-0 left-0" />
    <Corner className="right-0 top-0" />
  </section>
);

/* ---------- numbered call-outs drawn over the whole window ---------- */

const Callouts = () => (
  <svg className="pointer-events-none absolute inset-0 h-full w-full" viewBox="0 0 1680 1025" preserveAspectRatio="xMidYMid slice" aria-label="Steps">
    <g fill="none" stroke="#ff0000" strokeWidth="4">
      <path d="M242 197 21 342M31 323 20 342 42 339" />
      <path d="M1399 118 1548 211M1538 192 1549 211.500 1527 209" />
      <path d="M1401 351 1560 407M1545 392 1560 407.500 1538 410.500" />
      <path d="M1385 453 1476 463M1458 451 1476 463 1456 471" />
    </g>
    <g fill="#ff0000" fontSize="48" fontFamily="'Liberation Sans', sans-serif">
      <text x="244" y="204">1</text>
      <text x="1360" y="126">2</text>
      <text x="1361" y="360">3</text>
      <text x="1345" y="462">4</text>
    </g>
  </svg>
);

const App = () => (
  <div className="relative flex h-screen w-full flex-col overflow-hidden bg-[#727272] font-['DejaVu_Sans_Condensed','DejaVu_Sans',sans-serif] text-[11px] leading-[14px]">
    <InfoBar />
    <div className="flex min-h-0 flex-1">
      <div className="flex min-w-0 flex-1 flex-col">
        <div className="flex min-h-0 flex-1">
          <ToolShelf />
          <Viewport />
        </div>
        <ViewHeader />
        <Timeline />
      </div>
      <div className="flex w-[223px] shrink-0 flex-col border-l border-black">
        <Outliner />
        <Properties />
      </div>
    </div>
    <Callouts />
  </div>
);

export default App;
